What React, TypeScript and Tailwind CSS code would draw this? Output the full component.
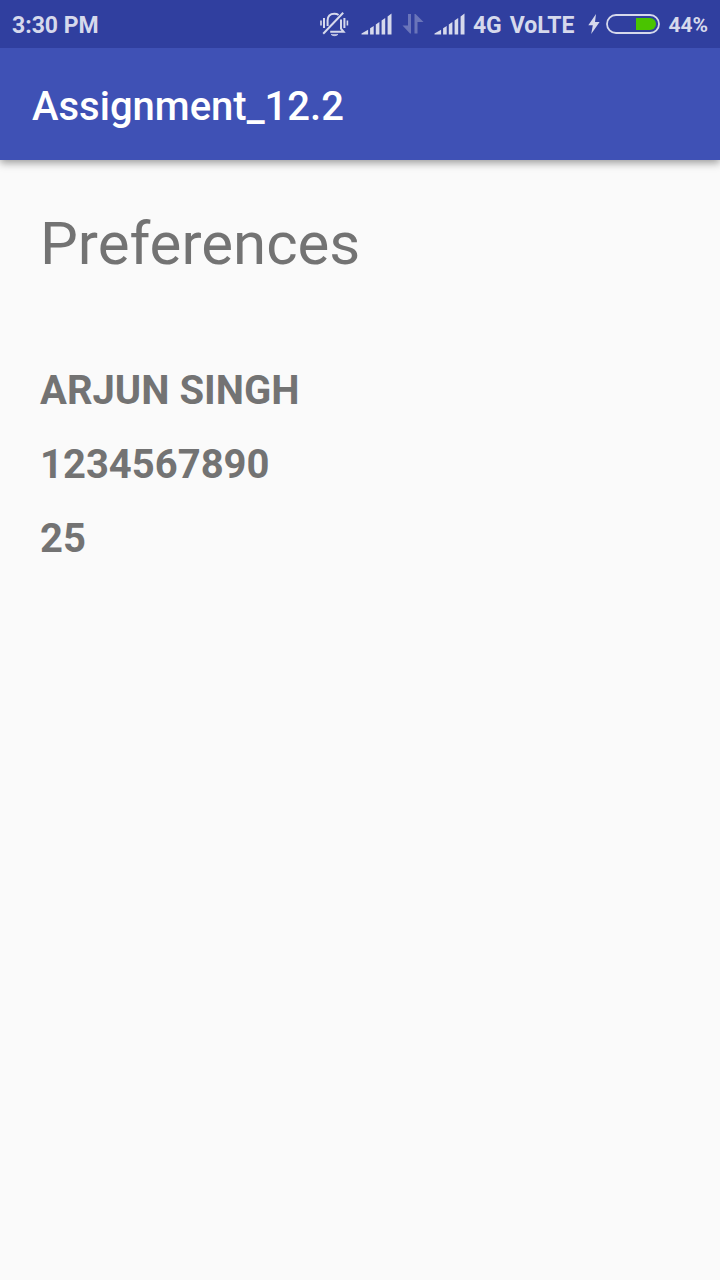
import type { ReactNode } from "react";

function SilentBellIcon() {
  return (
    <svg width="30" height="26" viewBox="0 0 30 26" fill="none" stroke="currentColor" strokeWidth="2" aria-hidden="true">
      <path d="M8.6 15V9.4C8.6 5.2 11 2.8 15.3 2.8c1.8 0 3.2.4 4.3 1.2" />
      <path d="M22 8.6v9l2.6 3.2H11.2" />
      <path d="M4.2 22.8 24.2 1.8" strokeWidth="2" />
      <path d="M12 23.4c1.6 1.8 5.4 1.8 7 0Z" fill="currentColor" strokeWidth="0.6" />
      <path d="M2 9.4v5.2M28.4 9.4v5.2" strokeWidth="1.6" />
      <path d="M5 7v10M25.4 7v10" strokeWidth="2" />
    </svg>
  );
}

function SignalIcon() {
  return (
    <svg width="31" height="22" viewBox="0 0 31 22" fill="currentColor" aria-hidden="true">
      <path d="M.5 21.4v-.8l6.6-3.8v4.6ZM9.1 15.3l3.6-2.4v8.5H9.1ZM14.8 11.5l3.6-2.6v12.5h-3.6ZM20.6 7.5l3.6-2.6v16.5h-3.6ZM26.6 3.4 30.5.6v20.8h-3.9Z" />
    </svg>
  );
}

function DataArrowsIcon() {
  return (
    <svg width="22" height="20" viewBox="0 0 22 20" fill="currentColor" className="opacity-35" aria-hidden="true">
      <path d="M6 0h3v19.5H8L.5 11.5H6ZM12.5 0h1l8 8h-6v11.5h-3Z" />
    </svg>
  );
}

function BoltIcon() {
  return (
    <svg width="12" height="20" viewBox="0 0 12 20" fill="currentColor" aria-hidden="true">
      <path d="M8 0 .3 11.2h4.5L3.2 20 11.6 8H7Z" />
    </svg>
  );
}

function BatteryIcon() {
  return (
    <svg width="54" height="20" viewBox="0 0 54 20" aria-hidden="true">
      <rect x="1" y="1" width="52" height="18" rx="9" fill="none" stroke="currentColor" strokeWidth="1.8" />
      <path d="M30 4h14a6 6 0 0 1 0 12H30Z" fill="#4ac400" />
    </svg>
  );
}

function StatusBar() {
  return (
    <header className="relative z-10 flex h-12 items-center bg-[#303f9f] px-3 text-[23px] leading-6 font-bold text-[#d6d9ec]">
      <time className="pt-1">3:30 PM</time>
      <div className="ml-auto flex items-center">
        <SilentBellIcon />
        <span className="ml-3"><SignalIcon /></span>
        <span className="ml-2.5"><DataArrowsIcon /></span>
        <span className="ml-2.5"><SignalIcon /></span>
        <span className="ml-2 pt-1">4G</span>
        <span className="ml-2 pt-1">VoLTE</span>
        <span className="ml-3.5"><BoltIcon /></span>
        <span className="ml-1.5"><BatteryIcon /></span>
        <span className="ml-2 pt-0.5 text-[21px]">44%</span>
      </div>
    </header>
  );
}

function Value({ children }: { children: ReactNode }) {
  return <li className="text-[40px] leading-[54px] font-bold">{children}</li>;
}

export default function App() {
  return (
    <div className="min-h-screen bg-[#fafafa] font-['Roboto',sans-serif] text-[#737373]">
      <StatusBar />
      <div className="flex h-28 items-center bg-[#3f51b5] px-8 pt-1.5 shadow-[0_3px_8px_rgba(0,0,0,0.38)]">
        <h1 className="text-[40px] leading-[48px] font-medium text-white">Assignment_12.2</h1>
      </div>
      <main className="px-10 pt-11">
        <h2 className="text-[60px] leading-[80px]">Preferences</h2>
        <ul className="mt-20 flex flex-col gap-5">
          <Value>ARJUN SINGH</Value>
          <Value>1234567890</Value>
          <Value>25</Value>
        </ul>
      </main>
    </div>
  );
}
